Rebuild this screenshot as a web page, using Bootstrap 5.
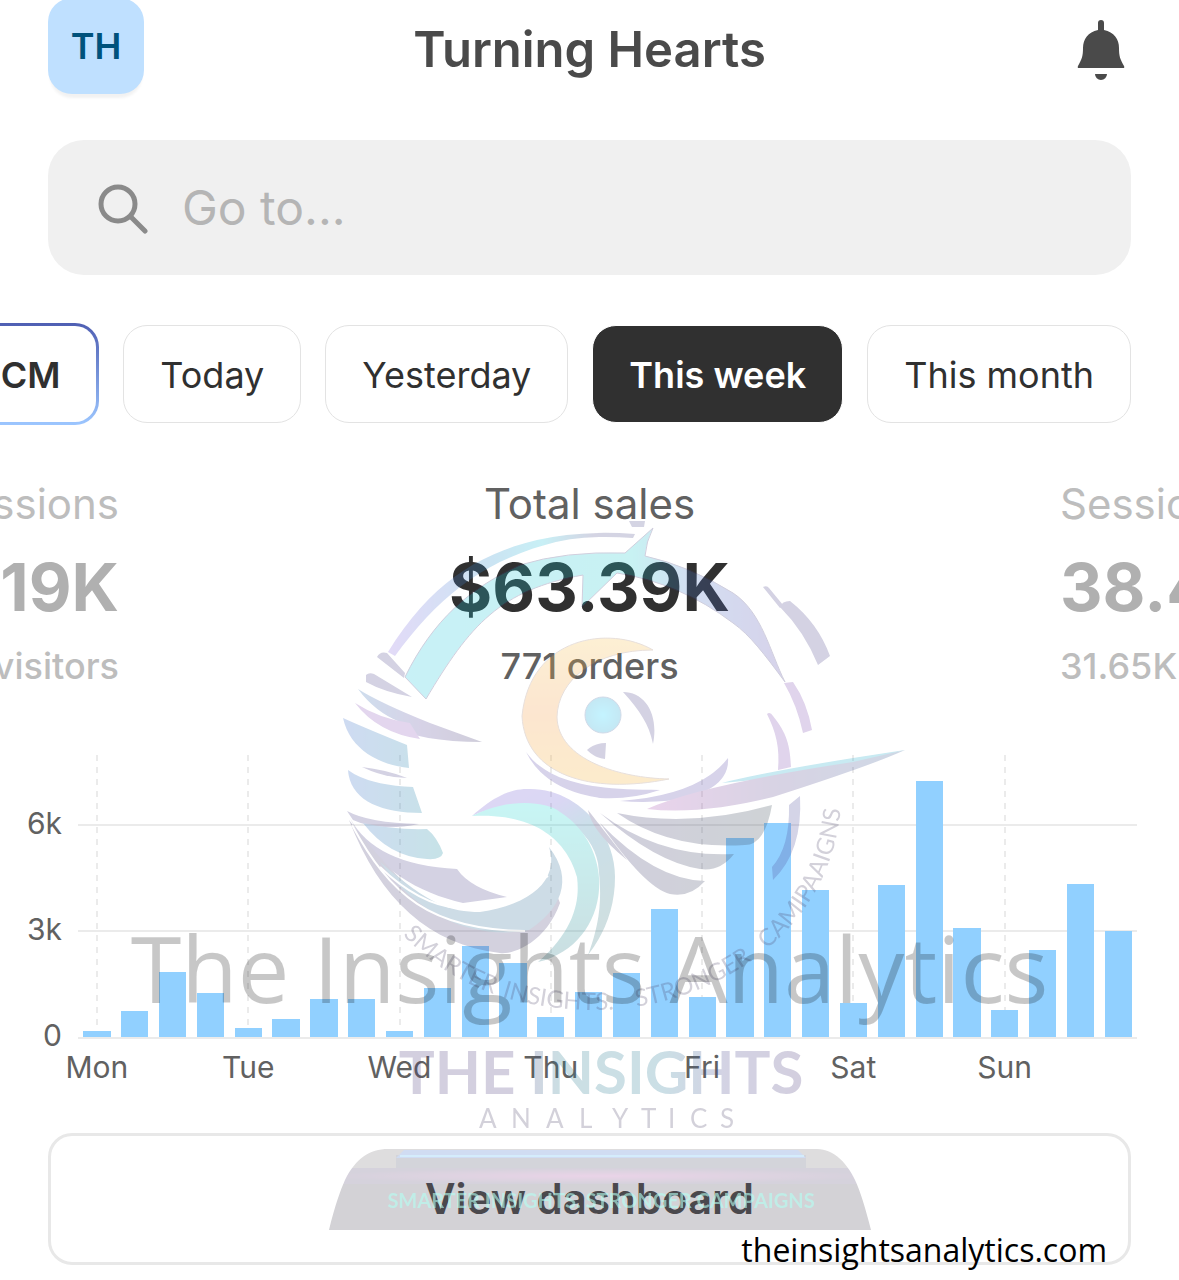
<!DOCTYPE html>
<html lang="en">
<head>
<meta charset="utf-8">
<meta name="viewport" content="width=device-width, initial-scale=1">
<title>Turning Hearts</title>
<link href="https://cdn.jsdelivr.net/npm/bootstrap@5.3.0/dist/css/bootstrap.min.css" rel="stylesheet">
<style>
body{font-family:Inter,"Liberation Sans",sans-serif;color:#303030;background:#fff;overflow-x:hidden}
main{display:flow-root;padding-bottom:15px}
.gutter{padding-left:48px;padding-right:48px}
.topbar{margin-top:-2px;height:104px}
.avatar{width:96px;height:96px;border-radius:24px;background:#bfe0ff;color:#00527c;font-size:36px;font-weight:600;box-shadow:0 6px 3px -2px #f2f2f2}
.shop-name{font-size:49px;line-height:60px;font-weight:600;color:#4a4a4a}
.bell-slot{width:96px}
.search-box{margin-top:38px;height:135px;border-radius:36px;background:#f0f0f0;padding:0 48px;gap:34px}
.search-box input{font-size:48px;line-height:60px;color:#4a4a4a}
.search-box input::placeholder{color:#b5b5b5;opacity:1}
.chips{margin-top:48px;gap:24px;overflow:hidden;height:102px}
.chip{flex:none;height:98px;padding:2px 36px 0;border:1px solid #e3e3e3;border-radius:24px;background:#fff;color:#303030;font-size:36px;line-height:44px;white-space:nowrap}
.chip-on{background:#303030;border-color:#fff;color:#fff;font-weight:600}
.chip-live{height:102px;border:3px solid transparent;background:linear-gradient(#fff,#fff) padding-box,linear-gradient(#4f5fb3,#9cc6ff) border-box;font-weight:600}
.metrics{margin-top:53px;height:240px}
.metric-side{width:119px;overflow:hidden;color:#b0b0b0;white-space:nowrap}
.metric-label{font-size:42px;line-height:52px}
.metric-value{font-size:66px;line-height:80px;font-weight:700;margin-top:17px}
.metric-note{font-size:36px;line-height:44px;font-weight:500;margin-top:17px}
.metric-main .metric-label,.metric-main .metric-note{color:#616161}
.metric-side .faded{color:#bdbdbd}
.chart{margin-top:37px;padding-right:42px;color:#616161;font-size:30px;line-height:36px}
.y-axis{width:78px;height:282px;position:relative}
.y-axis span{position:absolute;right:16px;transform:translateY(50%)}
.plot{height:284px;border-bottom:2px solid #ebebeb;background:linear-gradient(#ebebeb,#ebebeb) 0 69px/100% 2px no-repeat,linear-gradient(#ebebeb,#ebebeb) 0 175px/100% 2px no-repeat}
.slot{flex:1;position:relative}
.slot:nth-child(4n+1)::before{content:"";position:absolute;top:0;bottom:0;left:50%;width:2px;margin-left:-1px;background:repeating-linear-gradient(#ebebeb 0 6px,transparent 6px 12px)}
.bar{width:72%;background:#91d0ff;position:relative}
.days{padding:10px 0 0 78px}
.day{flex:1}
.day div{width:25%}
.cta-wrap{margin-top:48px}
.cta{height:132px;border:3px solid #e8e8e8;border-radius:24px;background:#fff;color:#4a4a4a;font-size:42px;line-height:52px;font-weight:600}
.site-link{position:absolute;right:72px;bottom:-7px;font-family:"Open Sans",sans-serif;font-size:32px;line-height:44px;color:#000}
.overlay-name{position:absolute;left:0;right:0;top:908px;font-family:"Open Sans",sans-serif;font-size:92px;line-height:120px;text-align:center;color:rgba(0,0,0,.22);white-space:nowrap;pointer-events:none}
.overlay-logo{position:absolute;left:0;right:0;top:510px;pointer-events:none}
.overlay-logo svg{flex:none}
.overlay-logo text{font-family:Lato,sans-serif}
</style>
</head>
<body>
<main class="position-relative">
<header class="topbar gutter d-flex justify-content-between align-items-center">
  <div class="avatar d-flex align-items-center justify-content-center align-self-start">TH</div>
  <h1 class="shop-name m-0">Turning Hearts</h1>
  <button class="bell-slot btn border-0 p-0 pe-1 d-flex justify-content-end" aria-label="Notifications">
    <svg width="50" height="62" viewBox="1077 19 50 62" fill="#4a4a4a"><path d="M1098 30V23a3 3 0 0 1 6 0v7c10 2 15 9 15 18 0 8 1 11 5 18q1 2-1 2h-44q-2 0-1-2c4-7 5-10 5-18 0-9 5-16 15-18zM1095 74h12a6 6 0 0 1-12 0z"/></svg>
  </button>
</header>

<div class="gutter">
  <label class="search-box d-flex align-items-center">
    <svg width="52" height="52" viewBox="95 181 52 52" fill="none" stroke="#8a8a8a" stroke-width="5" stroke-linecap="round"><circle cx="117" cy="203" r="17"/><path d="M130 216l14 14"/></svg>
    <input class="border-0 bg-transparent flex-grow-1 p-0" type="text" placeholder="Go to..." aria-label="Go to">
  </label>
</div>

<div class="chips gutter d-flex justify-content-end align-items-center">
  <button class="chip chip-live">CM</button>
  <button class="chip">Today</button>
  <button class="chip">Yesterday</button>
  <button class="chip chip-on">This week</button>
  <button class="chip">This month</button>
</div>

<section class="metrics d-flex justify-content-between">
  <div class="metric-side d-flex flex-column align-items-end">
    <div class="metric-label faded">Sessions</div><div class="metric-value">19K</div><div class="metric-note faded">visitors</div>
  </div>
  <div class="metric-main text-center">
    <div class="metric-label">Total sales</div><div class="metric-value">$63.39K</div><div class="metric-note">771 orders</div>
  </div>
  <div class="metric-side">
    <div class="metric-label faded">Sessions</div><div class="metric-value">38.4K</div><div class="metric-note faded">31.65K visitors</div>
  </div>
</section>

<section class="chart" aria-label="Total sales this week">
  <div class="d-flex">
    <div class="y-axis flex-shrink-0"><span style="bottom:214px">6k</span><span style="bottom:108px">3k</span><span style="bottom:2px">0</span></div>
    <div class="plot flex-grow-1 d-flex">
      <div class="slot d-flex align-items-end justify-content-center"><div class="bar" style="height:6px"></div></div>
      <div class="slot d-flex align-items-end justify-content-center"><div class="bar" style="height:26px"></div></div>
      <div class="slot d-flex align-items-end justify-content-center"><div class="bar" style="height:65px"></div></div>
      <div class="slot d-flex align-items-end justify-content-center"><div class="bar" style="height:44px"></div></div>
      <div class="slot d-flex align-items-end justify-content-center"><div class="bar" style="height:9px"></div></div>
      <div class="slot d-flex align-items-end justify-content-center"><div class="bar" style="height:18px"></div></div>
      <div class="slot d-flex align-items-end justify-content-center"><div class="bar" style="height:38px"></div></div>
      <div class="slot d-flex align-items-end justify-content-center"><div class="bar" style="height:38px"></div></div>
      <div class="slot d-flex align-items-end justify-content-center"><div class="bar" style="height:6px"></div></div>
      <div class="slot d-flex align-items-end justify-content-center"><div class="bar" style="height:49px"></div></div>
      <div class="slot d-flex align-items-end justify-content-center"><div class="bar" style="height:91px"></div></div>
      <div class="slot d-flex align-items-end justify-content-center"><div class="bar" style="height:74px"></div></div>
      <div class="slot d-flex align-items-end justify-content-center"><div class="bar" style="height:20px"></div></div>
      <div class="slot d-flex align-items-end justify-content-center"><div class="bar" style="height:45px"></div></div>
      <div class="slot d-flex align-items-end justify-content-center"><div class="bar" style="height:64px"></div></div>
      <div class="slot d-flex align-items-end justify-content-center"><div class="bar" style="height:128px"></div></div>
      <div class="slot d-flex align-items-end justify-content-center"><div class="bar" style="height:40px"></div></div>
      <div class="slot d-flex align-items-end justify-content-center"><div class="bar" style="height:199px"></div></div>
      <div class="slot d-flex align-items-end justify-content-center"><div class="bar" style="height:214px"></div></div>
      <div class="slot d-flex align-items-end justify-content-center"><div class="bar" style="height:147px"></div></div>
      <div class="slot d-flex align-items-end justify-content-center"><div class="bar" style="height:34px"></div></div>
      <div class="slot d-flex align-items-end justify-content-center"><div class="bar" style="height:152px"></div></div>
      <div class="slot d-flex align-items-end justify-content-center"><div class="bar" style="height:256px"></div></div>
      <div class="slot d-flex align-items-end justify-content-center"><div class="bar" style="height:109px"></div></div>
      <div class="slot d-flex align-items-end justify-content-center"><div class="bar" style="height:27px"></div></div>
      <div class="slot d-flex align-items-end justify-content-center"><div class="bar" style="height:87px"></div></div>
      <div class="slot d-flex align-items-end justify-content-center"><div class="bar" style="height:153px"></div></div>
      <div class="slot d-flex align-items-end justify-content-center"><div class="bar" style="height:106px"></div></div>
    </div>
  </div>
  <div class="days d-flex">
    <div class="day"><div class="d-flex justify-content-center">Mon</div></div>
    <div class="day"><div class="d-flex justify-content-center">Tue</div></div>
    <div class="day"><div class="d-flex justify-content-center">Wed</div></div>
    <div class="day"><div class="d-flex justify-content-center">Thu</div></div>
    <div class="day"><div class="d-flex justify-content-center">Fri</div></div>
    <div class="day"><div class="d-flex justify-content-center">Sat</div></div>
    <div class="day"><div class="d-flex justify-content-center">Sun</div></div>
  </div>
</section>

<div class="cta-wrap gutter position-relative">
  <button class="cta d-block w-100">View dashboard</button>
  <a class="site-link text-decoration-none" href="#">theinsightsanalytics.com</a>
</div>

<div class="overlay-logo d-flex justify-content-center">
<svg width="640" height="730" viewBox="270 510 640 730">
  <defs>
    <linearGradient id="arc"><stop offset="0" stop-color="#20c4dc"/><stop offset=".6" stop-color="#20c8cc"/><stop offset=".75" stop-color="#4a78c8"/><stop offset="1" stop-color="#5c4bab"/></linearGradient>
    <linearGradient id="rim"><stop offset="0" stop-color="#8c6be0"/><stop offset=".4" stop-color="#2c90cc"/><stop offset=".6" stop-color="#20c0d8"/><stop offset=".8" stop-color="#50508c"/></linearGradient>
    <linearGradient id="fea"><stop offset="0" stop-color="#3a6cc8"/><stop offset="1" stop-color="#1c8ca0"/></linearGradient>
    <linearGradient id="pur"><stop offset="0" stop-color="#3c78b8"/><stop offset=".5" stop-color="#5c4b9c"/><stop offset="1" stop-color="#40386c"/></linearGradient>
    <linearGradient id="swirl" x2="0" y2="1"><stop offset="0" stop-color="#20d8d4"/><stop offset="1" stop-color="#2c7884"/></linearGradient>
    <linearGradient id="swirl2" x2=".5" y2="1"><stop offset="0" stop-color="#7a60d0"/><stop offset=".3" stop-color="#6a5cd0"/><stop offset=".5" stop-color="#2c80a8"/><stop offset="1" stop-color="#3c7c84"/></linearGradient>
    <linearGradient id="moon" x2="0" y2="1"><stop offset="0" stop-color="#f4c050"/><stop offset=".5" stop-color="#f09840"/><stop offset="1" stop-color="#f0b030"/></linearGradient>
    <linearGradient id="beak"><stop offset="0" stop-color="#a850b0"/><stop offset=".5" stop-color="#604c90"/><stop offset="1" stop-color="#3c6498"/></linearGradient>
    <linearGradient id="wing"><stop offset="0" stop-color="#443c78"/><stop offset="1" stop-color="#3c4c58"/></linearGradient>
    <linearGradient id="word"><stop offset="0" stop-color="#4c3c7c"/><stop offset=".3" stop-color="#4c3c7c"/><stop offset=".4" stop-color="#2c7c90"/><stop offset=".65" stop-color="#2c7c98"/><stop offset=".8" stop-color="#4c4c90"/><stop offset="1" stop-color="#4c3c7c"/></linearGradient>
    <radialGradient id="slab"><stop offset="0" stop-color="#a850a0"/><stop offset="1" stop-color="#544a70"/></radialGradient>
    <radialGradient id="ball"><stop offset="0" stop-color="#10d0ff"/><stop offset="1" stop-color="#10a0d0"/></radialGradient>
    <path id="ring" d="M400 932C450 985 510 1008 590 1010C710 1012 848 930 841 780"/>
    <clipPath id="plinth"><path d="M329 1230C335 1205 341 1189 345 1180C356 1158 370 1149 388 1149H817C835 1149 848 1165 855 1180C860 1190 866 1210 871 1230z"/></clipPath>
  </defs>
  <g opacity=".25">
    <path fill="url(#rim)" d="M388 652C430 585 475 555 537 540Q580 530 635 534L633 538Q580 534 545 545C480 563 436 600 395 656zM629 521l16 0-1 6-12 0z"/>
    <path fill="url(#arc)" stroke="#443c78" stroke-width="1" d="M405 677C433 620 470 588 520 565Q565 551 625 553L653 528Q646 542 645 556Q690 566 733 593C762 612 770 652 785 682C765 655 750 635 733 623Q680 583 617 573L582 607L583 575C500 590 470 625 426 699z"/>
    <g fill="#50488c">
      <path d="M377 657q3-6 10-4l18 20-1 5zM366 675q3-3 8-1l38 23q-28-5-46-15z"/>
      <path d="M362 767q25 3 45 11-22 0-45-11zM347 811q22 12 72 13-40 8-66-4zM587 750q8-7 19-7l-1 16q-10-1-18-9zM623 692c22 0 36 22 30 52-4-20-13-33-30-52z"/>
      <path d="M763 587q4-2 6 1l14 17-3 3zM780 607q2-6 10-6 28 22 40 55l-12 9q-14-34-38-58z"/>
      <path fill="#8050b0" d="M784 683l9-1q14 20 19 48l-9 3q-6-28-19-50zM767 714q3-3 6 2c14 17 17 30 18 51l-13 3c2-22-2-38-11-56z"/>
      <path d="M789 805l11-9q3 55-27 84l-1-13q18-20 17-62z" fill="#50509c"/>
      <path d="M350 818Q375 865 457 869Q470 888 507 897L463 903C420 893 375 870 350 818z"/>
    </g>
    <path fill="url(#pur)" d="M358 689Q380 703 430 723L482 742Q420 742 387 725L400 722Q375 712 358 689z"/>
    <path fill="#8c58b8" d="M355 703q25 16 55 20l10 16q-42-6-65-36z"/>
    <g fill="url(#fea)">
      <path d="M343 718Q365 728 407 745L409 768C380 765 350 750 343 718zM348 770Q368 785 413 787L422 813C380 813 350 800 348 770zM363 823q30 7 64 6 10 8 16 24-2 7-16 6-38-2-64-36z"/>
    </g>
    <path fill="#4c4478" d="M349 820C400 885 430 912 480 918Q530 912 555 890L560 903C545 945 510 955 500 953C430 945 380 900 349 820z"/>
    <path fill="#347098" d="M380 862C430 905 450 912 480 912C530 905 560 880 549 847C575 880 560 910 529 930C480 940 420 920 380 862z"/>
    <path stroke="#fff" stroke-width="2" fill="none" d="M352 825C390 895 430 930 525 931M380 867C430 915 480 925 548 876"/>
    <path fill="url(#swirl2)" d="M472 816C493 797 510 789 527 789C575 787 615 830 615 877Q615 920 588 955C603 915 601 890 598 863C590 820 530 790 472 816z"/>
    <path fill="url(#swirl)" d="M472 816C510 797 547 802 560 812C620 850 610 945 538 962C575 930 580 900 577 877C570 850 545 812 472 816z"/>
    <path fill="url(#moon)" stroke="#a08070" stroke-width="1" d="M653 650C610 625 530 636 522 716C525 775 590 795 669 779C620 778 558 760 557 717C558 680 595 650 653 650z"/>
    <path fill="#5c4cab" d="M526 752C550 785 600 790 660 790Q630 800 600 798Q545 790 526 752zM620 801Q700 795 728 758Q730 785 690 797Q660 804 620 801z"/>
    <circle cx="603" cy="715" r="18" fill="url(#ball)" stroke="#4868a0" stroke-width="1"/>
    <path fill="#20a8c8" d="M722 783Q760 773 853 758L905 750Q820 775 722 783z"/>
    <path fill="url(#beak)" d="M647 809Q700 785 853 762L905 750Q870 766 773 797Q700 815 647 809z"/>
    <path fill="url(#wing)" d="M617 813Q690 828 772 805Q765 845 745 845Q670 850 617 813zM600 813Q660 858 734 854Q720 872 700 869Q655 862 600 813zM600 823Q655 880 705 881Q690 898 670 894Q645 888 600 823zM588 810q35 45 39 50-35-28-39-50z"/>
    <g clip-path="url(#plinth)">
      <path fill="#4c4858" d="M320 1149h560v81H320z"/>
      <path fill="#787478" d="M320 1149h560v19H320z"/>
      <path fill="url(#slab)" d="M320 1168h560v16H320z"/>
      <path fill="#4c5068" d="M396 1155h410v13h-410z"/>
      <path fill="#4070c8" d="M404 1150h394l8 8H396z"/>
      <path fill="#50b0f0" d="M400 1155h404v2H400z"/>
    </g>
    <g fill="#4c4468" font-size="24">
      <text><textPath href="#ring" startOffset="4">SMARTER</textPath></text>
      <text><textPath href="#ring" startOffset="122">INSIGHTS.</textPath></text>
      <text><textPath href="#ring" startOffset="258">STRONGER</textPath></text>
      <text><textPath href="#ring" startOffset="402">CAMIPAAIGNS</textPath></text>
    </g>
    <text x="601" y="1094" text-anchor="middle" font-size="60" font-weight="700" fill="url(#word)">THE INSIGHTS</text>
    <text y="1128" font-size="26" fill="#4c4468" x="479 511 546 579 612 641 668 690 720">ANALYTICS</text>
  </g>
  <text x="601" y="1208" text-anchor="middle" font-size="20" font-weight="700" fill="#b4fff2" opacity=".6">SMARTER INSIGHTS. STRONGER CAMPAIGNS</text>
</svg>
</div>
<div class="overlay-name">The Insights Analytics</div>
</main>
<script src="https://cdn.jsdelivr.net/npm/bootstrap@5.3.0/dist/js/bootstrap.bundle.min.js"></script>
</body>
</html>
